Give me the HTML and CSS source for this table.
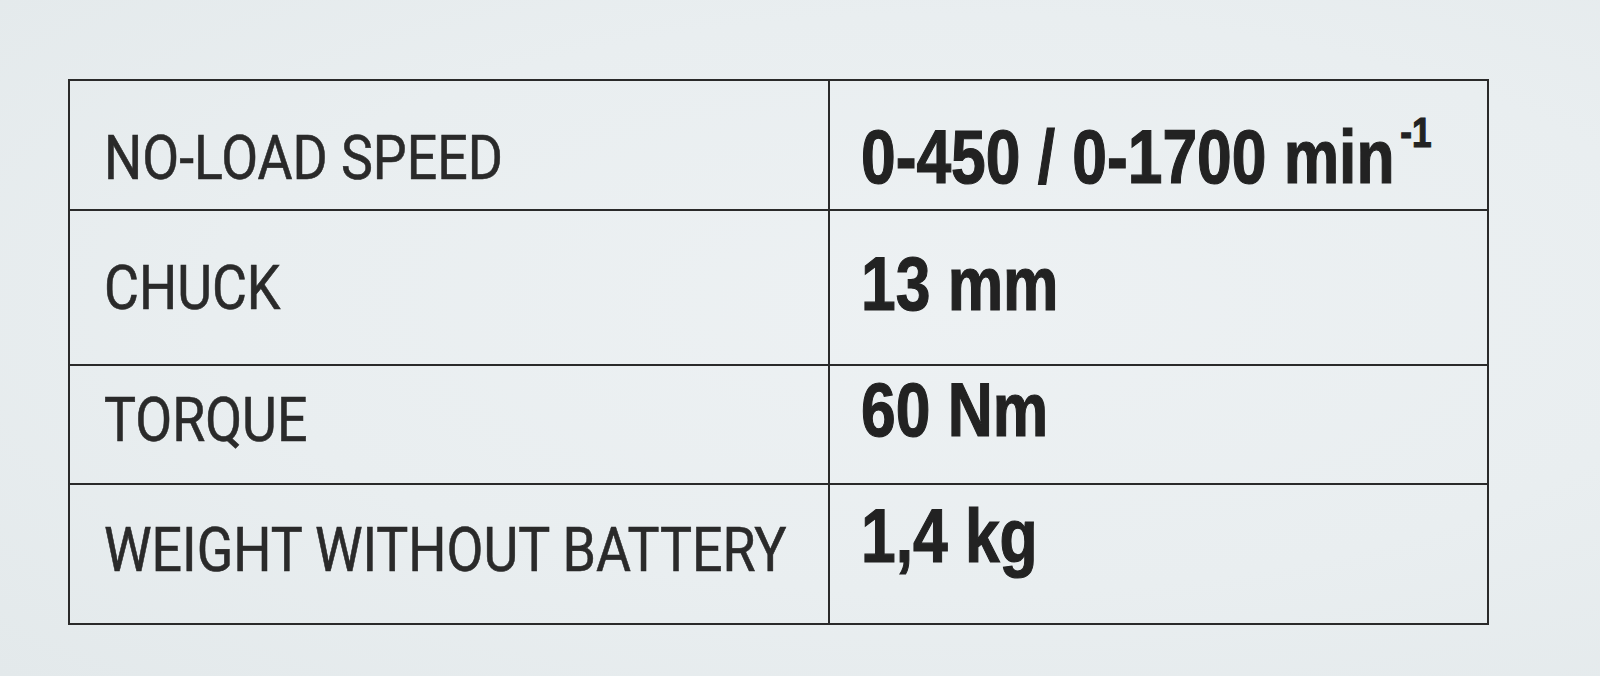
FILE: index.html
```html
<!DOCTYPE html>
<html lang="en">
<head>
<meta charset="utf-8">
<title>Specifications</title>
<link rel="stylesheet" href="styles.css">
</head>
<body>
<div class="page">
  <div class="spec-table">
    <div class="cell label r1"><span class="lbl">NO-LOAD SPEED</span></div>
    <div class="cell value r1"><span class="val">0-450 / 0-1700 min<span class="sup">-1</span></span></div>

    <div class="cell label r2"><span class="lbl">CHUCK</span></div>
    <div class="cell value r2"><span class="val">13 mm</span></div>

    <div class="cell label r3"><span class="lbl">TORQUE</span></div>
    <div class="cell value r3"><span class="val">60 Nm</span></div>

    <div class="cell label r4 last"><span class="lbl">WEIGHT WITHOUT BATTERY</span></div>
    <div class="cell value r4 last"><span class="val">1,4 kg</span></div>
  </div>
</div>
</body>
</html>
```

FILE: styles.css
```css
html, body {
  margin: 0;
  padding: 0;
}

body {
  width: 1600px;
  height: 676px;
  overflow: hidden;
  background: radial-gradient(ellipse at 60% 45%, #edf1f3 0%, #e9eef0 55%, #e3e9eb 100%);
}

.page {
  padding: 79px 0 0 68px;
}

.spec-table {
  width: 1421px;
  box-sizing: border-box;
  border: 2px solid #2a2a2a;
  display: grid;
  grid-template-columns: 760px minmax(0, 1fr);
  grid-template-rows: 130px 155px 119px 138px;
}

.cell {
  box-sizing: border-box;
  min-width: 0;
  border-bottom: 2px solid #2a2a2a;
  overflow: hidden;
  white-space: nowrap;
}

.cell.last {
  border-bottom: none;
}

.label {
  border-right: 2px solid #2a2a2a;
  padding-left: 34px;
}

.value {
  padding-left: 31px;
}

.lbl {
  display: inline-block;
  font-family: Roboto, "Liberation Sans", sans-serif;
  font-weight: 400;
  font-size: 62px;
  line-height: 62px;
  color: #2a2a2a;
  -webkit-text-stroke: 0.6px #2a2a2a;
  transform: scaleX(0.865);
  transform-origin: left top;
}

.val {
  display: inline-block;
  font-family: "Liberation Sans", Arial, sans-serif;
  font-weight: 700;
  font-size: 76px;
  line-height: 76px;
  color: #222222;
  -webkit-text-stroke: 1.2px #222222;
  transform: scaleX(0.82);
  transform-origin: left top;
}

.sup {
  font-size: 43px;
  line-height: 0;
  vertical-align: 36px;
  margin-left: 7px;
}

.label.r1 { padding-top: 46px; }
.label.r2 { padding-top: 46px; }
.label.r3 { padding-top: 23px; }
.label.r4 { padding-top: 34px; }

.value.r1 { padding-top: 38px; }
.value.r2 { padding-top: 35px; }
.value.r3 { padding-top: 6px; }
.value.r4 { padding-top: 13px; }
```
